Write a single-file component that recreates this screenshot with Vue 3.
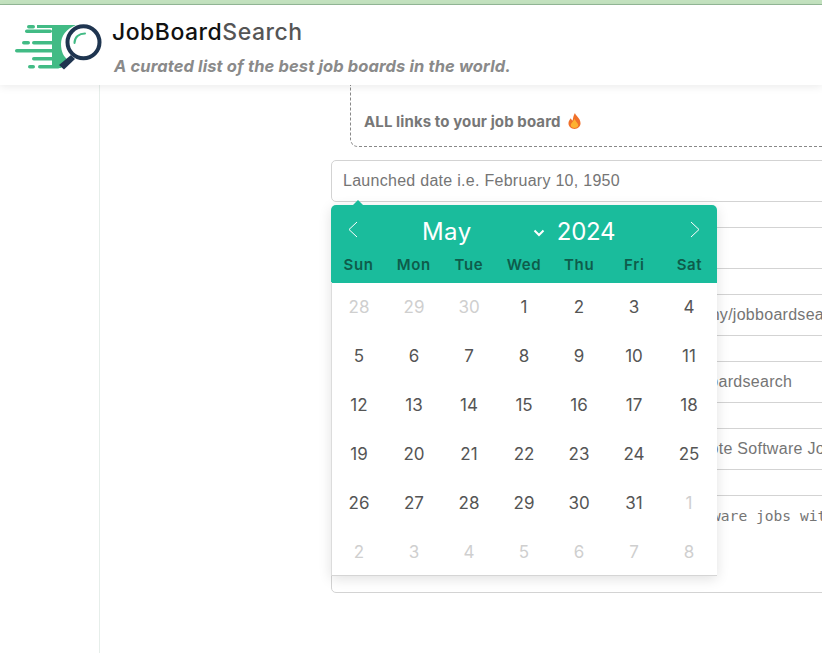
<script setup>
const weekdays = ['Sun', 'Mon', 'Tue', 'Wed', 'Thu', 'Fri', 'Sat']

const days = []
for (const d of [28, 29, 30]) days.push({ n: d, muted: true })
for (let d = 1; d <= 31; d++) days.push({ n: d, muted: false })
for (let d = 1; d <= 8; d++) days.push({ n: d, muted: true })

const inputs = [
  'Launched date i.e. February 10, 1950',
  '',
  'LinkedIn URL i.e. https://www.linkedin.com/company/jobboardsearch',
  'Twitter profile link i.e. https://www.twitter.com/jobboardsearch',
  'Site title i.e. JobBoardSearch: Find The Best Remote Software Jobs'
]
</script>

<template>
  <div class="page">
    <div class="strip"></div>
    <header class="header">
      <svg class="logo" width="88" height="46" viewBox="0 0 88 46">
        <g fill="#42bb85">
          <path d="M23 1H62C52 5 47 12 47 20C47 28 50 33 54 36L47 44H38V4H23Z" />
          <rect x="13" y="1" width="8" height="3.500" rx="1.750" />
          <rect x="11" y="5.500" width="27" height="3.500" rx="1.750" />
          <rect x="8" y="17" width="8" height="3.500" rx="1.750" />
          <rect x="18" y="17" width="22" height="3.500" rx="1.750" />
          <rect x="1" y="25" width="39" height="3.500" rx="1.750" />
          <rect x="18" y="33" width="22" height="3.500" rx="1.750" />
          <rect x="14" y="41" width="7" height="3.500" rx="1.750" />
          <rect x="24" y="41" width="22" height="3.500" rx="1.750" />
        </g>
        <circle cx="69.500" cy="18.300" r="16" fill="#fff" stroke="#1f3550" stroke-width="4" />
        <path d="M60.500 19C60.500 13 65 9.500 71 9.500" fill="none" stroke="#42bb85" stroke-width="2" stroke-linecap="round" />
        <path d="M57 31L61 35L50 45.500L45 41Z" fill="#1f3550" />
      </svg>
      <div class="brand">
        <div class="brand-name">JobBoard<span>Search</span></div>
        <div class="tagline">A curated list of the best job boards in the world.</div>
      </div>
    </header>

    <div class="body">
      <aside class="side"></aside>
      <main class="main">
        <div class="notice">
          <span>ALL links to your job board</span>
          <svg width="13" height="16" viewBox="0 0 14 17">
            <path d="M7.500 0C8 3 13.500 5.500 13.500 11C13.500 14.500 10.500 17 7 17C3.500 17 .5 14.500 .5 11C.5 8.500 2 7 3 5.500C3.500 6.500 4 7.500 5 8C5.500 5 6 2.500 7.500 0Z" fill="#f0702a" />
            <path d="M7 6C8 9 11 10.500 11 13C11 15 9 16 7 16C5 16 3 15 3 13C3 10.500 6 9 7 6Z" fill="#fdb130" />
          </svg>
        </div>

        <div class="form">
          <div class="date-wrap">
            <div class="field">{{ inputs[0] }}</div>
            <div class="calendar">
              <div class="cal-head">
                <div class="month-row">
                  <svg class="arrow" width="12" height="17" viewBox="0 0 12 17">
                    <path d="M10 1L2 8.500L10 16" fill="none" stroke="#fff" stroke-width="1" />
                  </svg>
                  <div class="current">
                    <span class="month">May</span>
                    <svg class="caret" width="12" height="8" viewBox="0 0 12 8">
                      <path d="M1.500 1.500L6 6L10.500 1.500" fill="none" stroke="#fff" stroke-width="2" />
                    </svg>
                    <span class="year">2024</span>
                  </div>
                  <svg class="arrow" width="12" height="17" viewBox="0 0 12 17">
                    <path d="M2 1L10 8.500L2 16" fill="none" stroke="#fff" stroke-width="1" />
                  </svg>
                </div>
                <div class="weekdays">
                  <span v-for="w in weekdays" :key="w">{{ w }}</span>
                </div>
              </div>
              <div class="days">
                <span v-for="(d, i) in days" :key="i" class="day" :class="{ muted: d.muted }">{{ d.n }}</span>
              </div>
            </div>
          </div>
          <div v-for="(text, i) in inputs.slice(1)" :key="i" class="field">{{ text }}</div>
          <div class="field area">Description i.e. Find the best remote software jobs with ease</div>
        </div>
      </main>
    </div>
  </div>
</template>

<style>
html, body {
  margin: 0;
  background: #fff;
  overflow: hidden;
}
</style>

<style scoped>
.page {
  width: 822px;
  height: 653px;
  overflow: hidden;
  font-family: Inter, "Liberation Sans", sans-serif;
}

.strip {
  height: 4px;
  background: #c3e2bf;
  border-bottom: 1px solid #93b896;
}

.header {
  height: 80px;
  display: flex;
  padding-left: 14px;
  background: #fff;
  box-shadow: 0 2px 8px rgba(0, 0, 0, 0.08);
  position: relative;
  z-index: 2;
}

.logo {
  margin-top: 19px;
  flex-shrink: 0;
}

.brand {
  margin-left: 10px;
  padding-top: 12px;
}

.brand-name {
  font-size: 23px;
  line-height: 30px;
  font-weight: 500;
  letter-spacing: 0.5px;
  color: #111;
}

.brand-name span {
  color: #555;
}

.tagline {
  margin: 8px 0 0 2px;
  font-size: 16.5px;
  line-height: 22px;
  font-weight: 700;
  font-style: italic;
  letter-spacing: 0.12px;
  color: #8a8a8a;
}

.body {
  display: flex;
  height: 568px;
}

.side {
  width: 99px;
  flex-shrink: 0;
  border-right: 1px solid #e6eeea;
}

.main {
  padding-left: 231px;
  flex-shrink: 0;
}

.notice {
  margin-left: 19px;
  width: 700px;
  height: 62px;
  box-sizing: border-box;
  padding: 26px 0 0 13px;
  border: 1px dashed #888;
  border-top: 0;
  border-radius: 0 0 0 8px;
  display: flex;
  align-items: flex-start;
  gap: 7px;
  font-size: 15px;
  line-height: 22px;
  font-weight: 700;
  letter-spacing: 0.1px;
  color: #777;
}

.notice svg {
  margin-top: 2px;
}

.form {
  margin-top: 13px;
  width: 720px;
  display: flex;
  flex-direction: column;
  gap: 25px;
}

.date-wrap {
  position: relative;
}

.field {
  height: 42px;
  box-sizing: border-box;
  padding: 0 11px;
  border: 1px solid #d3d3d3;
  border-radius: 5px;
  font-family: "Liberation Sans", Arial, sans-serif;
  font-size: 16px;
  line-height: 40px;
  letter-spacing: 0.28px;
  color: #757575;
  white-space: nowrap;
  overflow: hidden;
}

.area {
  height: 98px;
  font-family: "DejaVu Sans Mono", monospace;
  font-size: 14.6px;
  line-height: 18px;
  letter-spacing: 0;
  padding-top: 11px;
}

.calendar {
  position: absolute;
  top: 45px;
  left: 0;
  width: 386px;
  height: 371px;
  background: #fff;
  border-radius: 5px 5px 0 0;
  box-shadow: 0 3px 13px rgba(0, 0, 0, 0.12);
  z-index: 5;
}

.calendar::before {
  content: "";
  position: absolute;
  top: -5px;
  left: 22px;
  border-left: 5px solid transparent;
  border-right: 5px solid transparent;
  border-bottom: 5px solid #1abc9c;
}

.cal-head {
  height: 78px;
  box-sizing: border-box;
  background: #1abc9c;
  border-radius: 5px 5px 0 0;
  padding-top: 16px;
}

.month-row {
  height: 22px;
  display: flex;
  justify-content: space-between;
  padding: 0 16px;
  color: #fff;
}

.current {
  display: flex;
  align-items: center;
  font-size: 24px;
  line-height: 22px;
}

.month {
  width: 70px;
  padding-right: 30px;
  text-align: center;
  letter-spacing: 0.5px;
}

.caret {
  margin: 2px 0 0 21px;
}

.year {
  margin-left: 12px;
  margin-right: 21px;
  letter-spacing: -0.3px;
}

.weekdays {
  margin-top: 12px;
  display: grid;
  grid-template-columns: repeat(7, 1fr);
  text-align: center;
  font-size: 15px;
  line-height: 20px;
  font-weight: 600;
  letter-spacing: 0.6px;
  color: #0e5c4b;
}

.days {
  height: 293px;
  display: grid;
  grid-template-columns: repeat(7, 55px);
  grid-auto-rows: 49px;
  margin-top: -1px;
  border-left: 1px solid #dcdcdc;
  border-bottom: 1px solid #d5d5d5;
}

.day {
  display: flex;
  align-items: center;
  justify-content: center;
  font-size: 17px;
  color: #555;
  margin-left: -1px;
}

.day.muted {
  color: #cfcfcf;
}
</style>
